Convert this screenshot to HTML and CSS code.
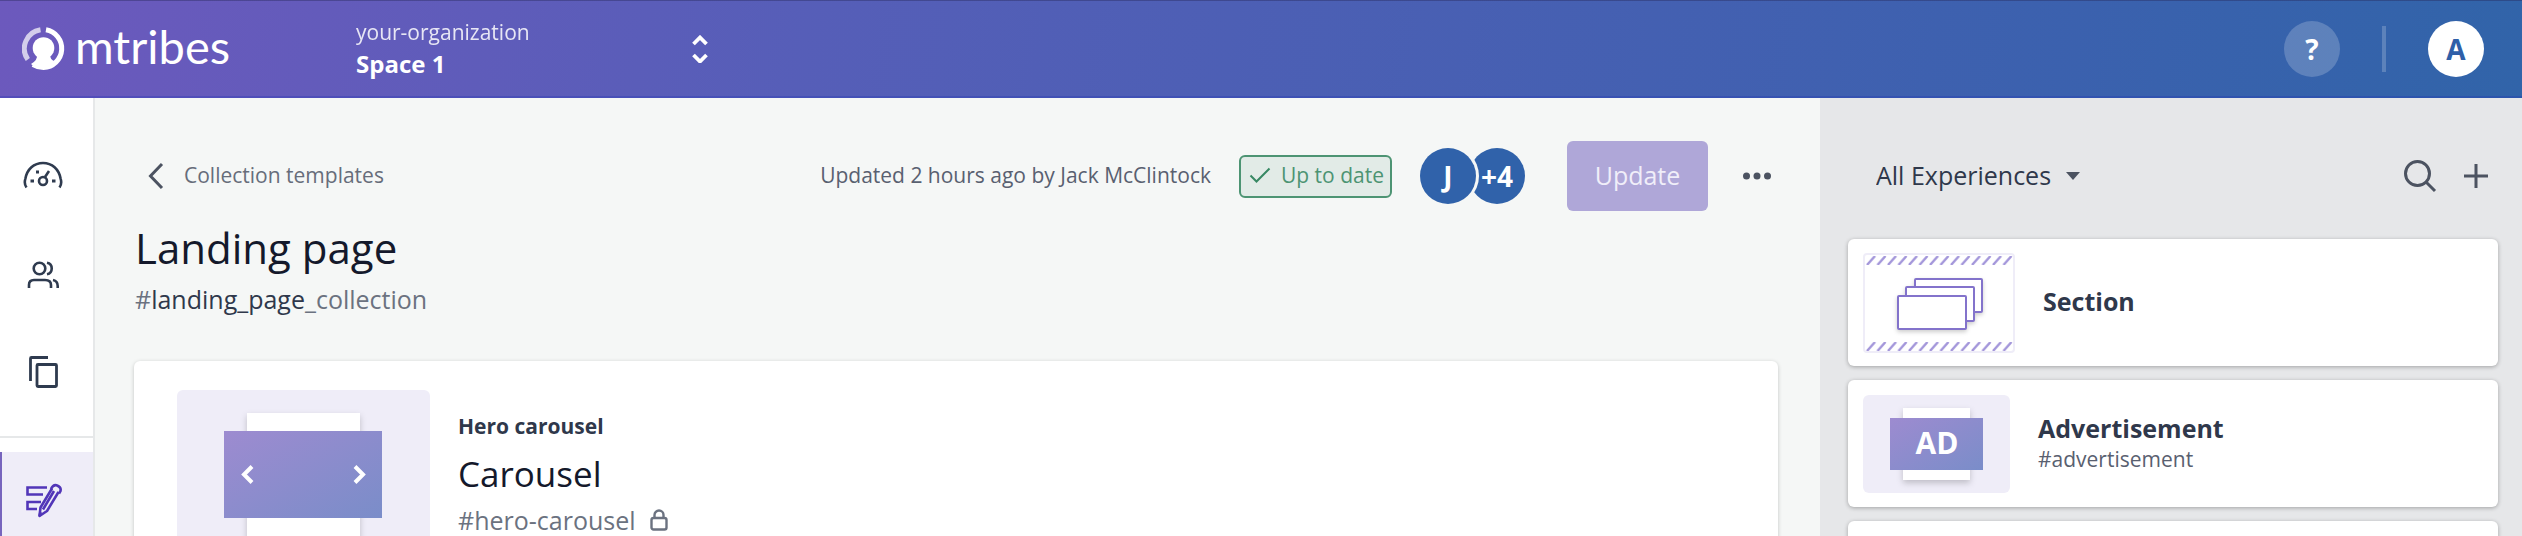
FILE: index.html
```
<!DOCTYPE html>
<html lang="en">
<head>
  <meta charset="UTF-8">
  <meta name="viewport" content="width=device-width, initial-scale=1.0">
  <title>mtribes</title>
  <link rel="stylesheet" href="styles.css">
</head>
<body>
  <header class="topbar">
    <a class="logo" href="#">
      <svg width="43" height="44" viewBox="0 0 43 44" fill="none">
        <path d="M18.500 2.800A19 19 0 0 0 5.800 32.500" stroke="#fff" stroke-opacity=".7" stroke-width="5"/>
        <path d="M24 2.800A19 19 0 0 1 21.500 40.500Q16 40.500 11 37.500" stroke="#fff" stroke-width="5"/>
        <circle cx="21.500" cy="21" r="10.800" fill="#fff"/>
        <path d="M15 27H28Q27 32 34 35Q28 42 21.500 42Q14 42 9 37Q16 33 15 27Z" fill="#fff"/>
      </svg>
      <span>mtribes</span>
    </a>
    <button class="space-switch">
      <span class="space-names">
        <span class="org">your-organization</span>
        <span class="space">Space 1</span>
      </span>
      <svg width="16" height="28" viewBox="0 0 16 28" fill="none" stroke="#fff" stroke-width="3.800">
        <path d="M1.500 9L8 2.500L14.500 9M1.500 20L8 26.500L14.500 20"/>
      </svg>
    </button>
    <div class="topbar-right">
      <button class="round help">?</button>
      <span class="separator"></span>
      <button class="round account">A</button>
    </div>
  </header>

  <div class="layout">
    <nav class="sidebar">
      <a class="nav-item" href="#" aria-label="Dashboard">
        <svg width="40" height="40" viewBox="0 2 40 40" fill="none" stroke="#2f3b4f" stroke-width="2.600">
          <path d="M3.500 33.500C1.700 31 1.700 27 2.300 25C4 15 11 9 20 9S36 15 37.700 25C38.300 27 38.300 31 36.500 33.500"/>
          <circle cx="20" cy="27" r="4"/>
          <path d="M22 23L26 17"/>
          <path d="M13 18H16M7.500 27H11M29 27H32.500" stroke-width="3.200"/>
        </svg>
      </a>
      <a class="nav-item" href="#" aria-label="People">
        <svg width="40" height="40" viewBox="0 0 40 40" fill="none" stroke="#2f3b4f" stroke-width="2.600">
          <circle cx="16.500" cy="14.500" r="5.800"/>
          <path d="M6 34V31Q6 26 11 26H22Q28 26 28 31V34"/>
          <path d="M24 8.800A5.800 5.800 0 0 1 24 20.200M30 26Q34.700 27 34.700 32V34"/>
        </svg>
      </a>
      <a class="nav-item" href="#" aria-label="Copies">
        <svg width="40" height="40" viewBox="0 0 40 40" fill="none" stroke="#2f3b4f" stroke-width="2.800">
          <rect x="14" y="12.500" width="19.500" height="22" rx="1"/>
          <path d="M7.500 29V6.500Q7.500 5.500 8.500 5.500H25"/>
        </svg>
      </a>
      <a class="nav-item active" href="#" aria-label="Templates">
        <svg width="40" height="40" viewBox="0 0 40 40" fill="none" stroke="#5236b8" stroke-width="2.600">
          <path d="M24 6.500H4.500V13.500H20M18 21H4.500V28H14"/>
          <path d="M29 7.500L17.500 26.500L16.500 35L24 30L35.500 11" stroke-linejoin="round"/>
          <path d="M31 10L20 28.500M28 8Q30 3.500 33.500 4.200Q38.500 6 37.500 10L36 12.500M16.500 35L17.500 31"/>
        </svg>
      </a>
    </nav>

    <main class="content">
      <div class="toolbar">
        <a class="back" href="#">
          <svg width="16" height="28" viewBox="0 0 16 28" fill="none" stroke="#4c5361" stroke-width="3">
            <path d="M14 2L2.500 14L14 26"/>
          </svg>
          <span>Collection templates</span>
        </a>
        <div class="actions">
          <span class="updated">Updated 2 hours ago by Jack McClintock</span>
          <span class="status">
            <svg width="22" height="18" viewBox="0 0 22 18" fill="none" stroke="#378863" stroke-width="2">
              <path d="M1.500 9.500L7.500 15.500L20.500 2.500"/>
            </svg>
            Up to date
          </span>
          <div class="avatars">
            <span class="round avatar">J</span>
            <span class="round avatar">+4</span>
          </div>
          <button class="update" disabled>Update</button>
          <button class="icon-button" aria-label="More">
            <svg width="28" height="8" viewBox="0 0 28 8" fill="#4c5361">
              <circle cx="3.500" cy="4" r="3.500"/>
              <circle cx="14" cy="4" r="3.500"/>
              <circle cx="24.500" cy="4" r="3.500"/>
            </svg>
          </button>
        </div>
      </div>

      <h1>Landing page</h1>
      <p class="page-id">#<span>landing_page</span>_collection</p>

      <article class="collection-card">
        <div class="thumb">
          <svg width="253" height="174" viewBox="0 0 253 174">
            <defs>
              <linearGradient id="banner" x1="0" y1="0" x2="1" y2="1">
                <stop offset="0" stop-color="#9d8bd0"/>
                <stop offset="1" stop-color="#7a8dc9"/>
              </linearGradient>
            </defs>
            <rect class="sheet" x="70" y="23" width="113" height="127"/>
            <rect x="47" y="41" width="158" height="87" fill="url(#banner)"/>
            <path d="M75 76.500L67 84.500L75 92.500M178 76.500L186 84.500L178 92.500" fill="none" stroke="#fff" stroke-width="4"/>
          </svg>
        </div>
        <div class="collection-info">
          <h3>Hero carousel</h3>
          <h2>Carousel</h2>
          <p>#hero-carousel
            <svg width="18" height="22" viewBox="0 0 18 22" fill="none" stroke="#6b7280" stroke-width="2.400">
              <rect x="1.500" y="9" width="15" height="11.500" rx="2"/>
              <path d="M4.500 9V6A4.500 4.500 0 0 1 13.500 6V9"/>
            </svg>
          </p>
        </div>
      </article>
    </main>

    <aside class="experiences">
      <div class="filter-row">
        <label class="filter">
          <select aria-label="Experience filter">
            <option>All Experiences</option>
          </select>
          <svg width="14" height="8" viewBox="0 0 14 8" fill="#4c5361"><path d="M0 0H14L7 8Z"/></svg>
        </label>
        <div class="filter-tools">
          <button class="icon-button" aria-label="Search">
            <svg width="34" height="34" viewBox="0 0 34 34" fill="none" stroke="#4c5361" stroke-width="3">
              <circle cx="14.500" cy="14.500" r="12"/>
              <path d="M23 23L32 32"/>
            </svg>
          </button>
          <button class="icon-button" aria-label="Add">
            <svg width="26" height="26" viewBox="0 0 26 26" fill="none" stroke="#4c5361" stroke-width="3">
              <path d="M13 1V25M1 13H25"/>
            </svg>
          </button>
        </div>
      </div>

      <div class="experience-card">
        <svg width="152" height="100" viewBox="0 0 152 100">
          <defs>
            <pattern id="stripes" width="10.500" height="9" patternUnits="userSpaceOnUse">
              <path d="M1 9L9 0" stroke="#a396da" stroke-width="2.400"/>
            </pattern>
          </defs>
          <rect x="1" y="1" width="150" height="98" rx="3" fill="#fff" stroke="#efedf8" stroke-width="2"/>
          <rect width="147" height="9" fill="url(#stripes)" transform="translate(3 3)"/>
          <rect width="147" height="9" fill="url(#stripes)" transform="translate(3 89)"/>
          <g class="frame" fill="#fff" stroke="#8373cb" stroke-width="2">
            <rect x="52" y="26" width="67" height="33" rx="1"/>
            <rect x="43" y="34" width="68" height="34" rx="1"/>
            <rect x="35" y="43" width="68" height="33" rx="1"/>
          </g>
        </svg>
        <div class="experience-text">
          <h4>Section</h4>
        </div>
      </div>

      <div class="experience-card">
        <div class="thumb">
          <svg width="147" height="98" viewBox="0 0 147 98">
            <rect class="sheet" x="40" y="13" width="67" height="72"/>
            <rect x="27" y="23" width="93" height="52" fill="url(#banner)"/>
            <text x="74" y="59" text-anchor="middle">AD</text>
          </svg>
        </div>
        <div class="experience-text">
          <h4>Advertisement</h4>
          <p>#advertisement</p>
        </div>
      </div>

      <div class="experience-card"></div>
    </aside>
  </div>
</body>
</html>
```

FILE: styles.css
```
* {
  box-sizing: border-box;
}

body {
  margin: 0;
  height: 100vh;
  display: flex;
  flex-direction: column;
  overflow: hidden;
  font-family: "Open Sans", sans-serif;
  color: #2f384b;
  background-color: #f5f7f6;
}

h1, h2, h3, h4, p {
  margin: 0;
}

svg {
  display: block;
  flex: none;
}

a {
  color: inherit;
  text-decoration: none;
}

button, select {
  font: inherit;
  color: inherit;
  border: none;
  padding: 0;
  background: none;
}

.topbar {
  height: 98px;
  flex: none;
  display: flex;
  align-items: center;
  padding: 0 38px 0 22px;
  color: #fff;
  background: linear-gradient(100deg, #6c59bd 0%, #565eb8 32%, #3b61ae 82%, #3164a9 100%);
  border-top: 1px solid rgba(40, 40, 90, 0.4);
  border-bottom: 2px solid rgba(30, 50, 180, 0.3);
}

.logo {
  width: 334px;
  display: flex;
  align-items: center;
  gap: 10px;
  font-family: Lato, sans-serif;
  font-size: 47px;
  line-height: 54px;
}

.logo span {
  padding-bottom: 6px;
}

.space-switch {
  width: 352px;
  display: flex;
  align-items: center;
  justify-content: space-between;
  text-align: left;
}

.space-names {
  display: flex;
  flex-direction: column;
  padding-bottom: 2px;
}

.org {
  font-size: 21px;
  line-height: 32px;
  opacity: 0.85;
}

.space {
  font-size: 24px;
  line-height: 32px;
  font-weight: 700;
}

.topbar-right {
  margin-left: auto;
  display: flex;
  align-items: center;
  gap: 42px;
}

.round {
  width: 56px;
  height: 56px;
  border-radius: 50%;
  display: flex;
  align-items: center;
  justify-content: center;
  font-size: 28px;
  font-weight: 700;
}

.help {
  background-color: rgba(255, 255, 255, 0.2);
}

.separator {
  width: 4px;
  height: 46px;
  background-color: rgba(255, 255, 255, 0.2);
}

.account {
  background-color: #fff;
  color: #2f5fa8;
}

.layout {
  flex: 1;
  min-height: 0;
  display: flex;
}

.sidebar {
  width: 95px;
  flex: none;
  padding-top: 29px;
  background-color: #fff;
  border-right: 2px solid #e6e8e9;
}

.nav-item {
  height: 98px;
  display: flex;
  align-items: center;
  padding-left: 23px;
}

.nav-item.active {
  position: relative;
  margin-top: 31px;
  padding-left: 21px;
  background-color: #efedf8;
  border-left: 2px solid #7765bd;
}

/* divider above the template section */
.nav-item.active::before {
  content: "";
  position: absolute;
  left: -2px;
  right: 0;
  top: -16px;
  height: 2px;
  background-color: #e6e8e9;
}

.content {
  flex: 1;
  min-width: 0;
  padding: 43px 42px 0 39px;
}

.toolbar {
  height: 70px;
  display: flex;
  align-items: center;
  justify-content: space-between;
  padding-right: 7px;
  padding-left: 14px;
}

.back {
  display: flex;
  align-items: center;
  gap: 20px;
  font-size: 21px;
  color: #676d7a;
}

.back span,
.updated {
  padding-bottom: 2px;
}

.actions {
  display: flex;
  align-items: center;
}

.updated {
  font-size: 21px;
  color: #596070;
  margin-right: 28px;
}

.status {
  width: 153px;
  height: 43px;
  display: flex;
  align-items: center;
  gap: 10px;
  padding-left: 8px;
  padding-bottom: 2px;
  margin-right: 28px;
  font-size: 21px;
  white-space: nowrap;
  color: #4d9473;
  background-color: #e2ebe7;
  border: 2px solid #4d9473;
  border-radius: 6px;
}

.avatars {
  display: flex;
  margin-right: 42px;
}

.avatar {
  color: #fff;
  background-color: #3062aa;
}

.avatar:first-child {
  z-index: 1;
  margin-right: -7px;
  box-shadow: 0 0 0 3px #f5f7f6;
}

.update {
  width: 141px;
  height: 70px;
  padding-bottom: 2px;
  margin-right: 35px;
  font-size: 25px;
  color: #f0eef9;
  background-color: #afa7d8;
  border-radius: 6px;
}

h1 {
  margin-top: 8px;
  padding-left: 1px;
  font-size: 42px;
  line-height: 58px;
  font-weight: 400;
  color: #14192b;
}

.page-id {
  margin-top: 4px;
  padding-left: 1px;
  font-size: 25px;
  line-height: 36px;
  color: #6b7280;
}

.page-id span {
  color: #2f384b;
}

.collection-card {
  margin-top: 44px;
  display: flex;
  gap: 28px;
  padding: 29px 43px;
  background-color: #fff;
  border-radius: 6px;
  box-shadow: 0 1px 4px rgba(0, 0, 0, 0.2);
}

.thumb {
  flex: none;
  background-color: #efedf8;
  border-radius: 6px;
}

.thumb text {
  font-size: 30px;
  font-weight: 700;
  fill: #fff;
}

.sheet {
  fill: #fff;
  filter: drop-shadow(0 3px 3px rgba(0, 0, 0, 0.2));
}

.collection-info {
  padding-top: 20px;
}

.collection-info h3 {
  font-size: 21px;
  line-height: 32px;
  font-weight: 700;
}

.collection-info h2 {
  margin-top: 8px;
  font-size: 35px;
  line-height: 48px;
  font-weight: 400;
  color: #14192b;
}

.collection-info p {
  display: flex;
  align-items: center;
  gap: 14px;
  font-size: 25px;
  line-height: 44px;
  color: #6b7280;
}

.experiences {
  width: 702px;
  flex: none;
  display: flex;
  flex-direction: column;
  gap: 14px;
  padding: 43px 24px 0 28px;
  background-color: #e6e7e9;
}

.filter-row {
  height: 70px;
  flex: none;
  display: flex;
  align-items: center;
  justify-content: space-between;
  margin-bottom: 14px;
  padding: 0 9px 0 28px;
}

.filter {
  display: flex;
  align-items: center;
  gap: 14px;
}

.filter select {
  appearance: none;
  padding-bottom: 2px;
  font-size: 25px;
}

.filter-tools {
  display: flex;
  align-items: center;
  gap: 26px;
}

.experience-card {
  height: 127px;
  flex: none;
  display: flex;
  align-items: center;
  gap: 28px;
  padding: 0 15px;
  background-color: #fff;
  border-radius: 6px;
  box-shadow: 0 1px 4px rgba(0, 0, 0, 0.3);
}

.frame {
  filter: drop-shadow(0 2px 2px rgba(0, 0, 0, 0.2));
}

.experience-text {
  padding-bottom: 3px;
}

.experience-card h4 {
  font-size: 25px;
  line-height: 34px;
  font-weight: 700;
}

.experience-card p {
  font-size: 21px;
  line-height: 28px;
  color: #596070;
}
```
